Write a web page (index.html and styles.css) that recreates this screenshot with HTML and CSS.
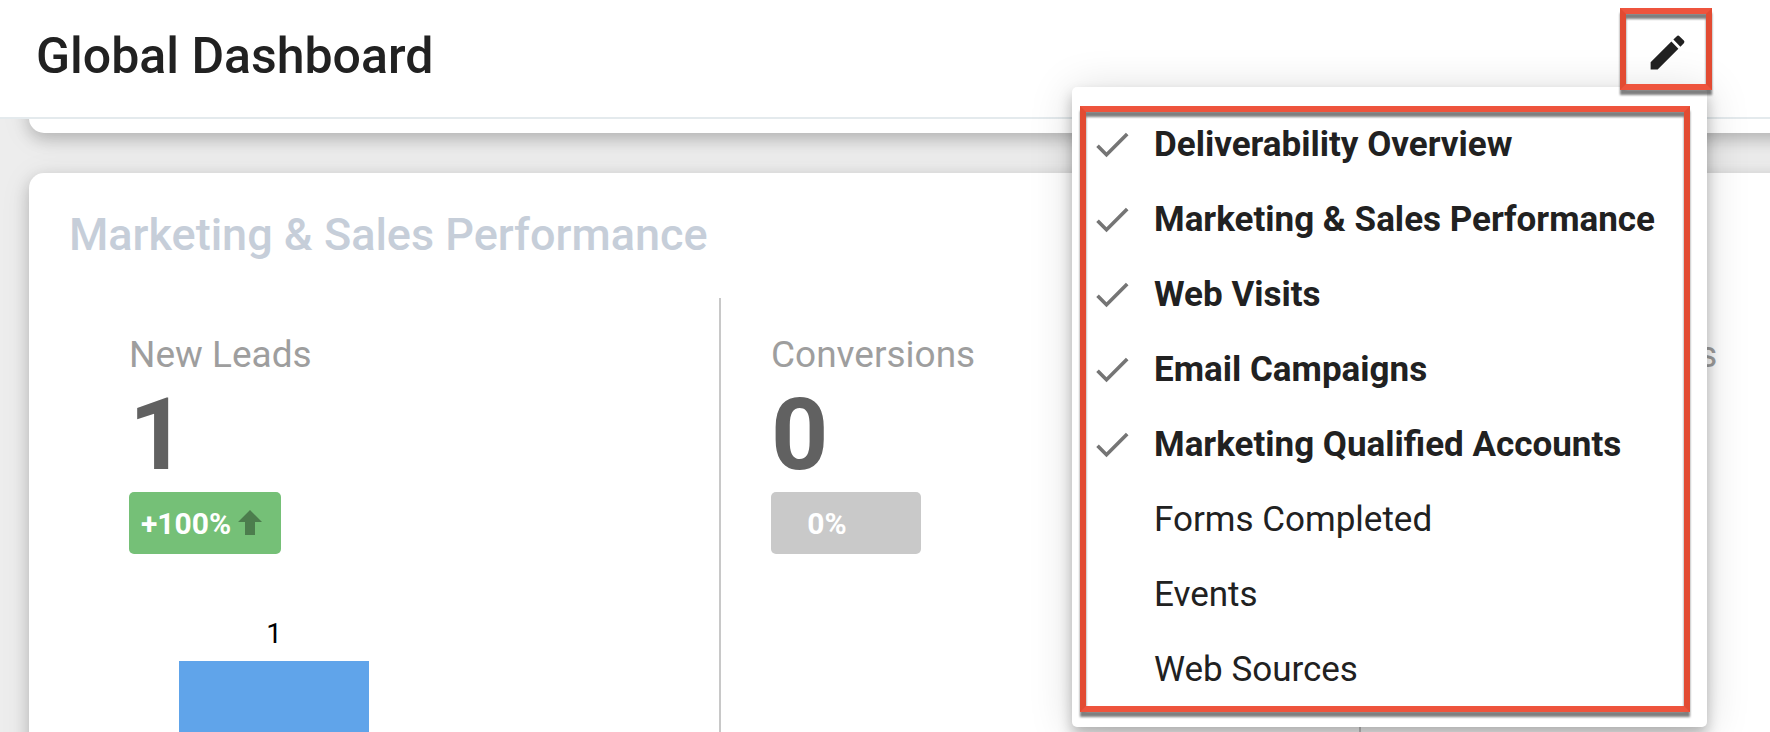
FILE: index.html
```
<!DOCTYPE html>
<html lang="en">
<head>
  <meta charset="UTF-8">
  <meta name="viewport" content="width=device-width, initial-scale=1.0">
  <title>Global Dashboard</title>
  <link rel="stylesheet" href="styles.css">
</head>
<body>

  <header class="header">
    <h1>Global Dashboard</h1>
    <button class="edit-button highlight" type="button" aria-label="Edit dashboard">
      <svg viewBox="0 0 24 24" aria-hidden="true">
        <path d="M3 17.25V21h3.75L17.81 9.94l-3.75-3.75L3 17.25zM20.71 7.04c.39-.39.39-1.02 0-1.41l-2.34-2.34c-.39-.39-1.02-.39-1.41 0l-1.83 1.83 3.75 3.75 1.83-1.83z"/>
      </svg>
    </button>

    <div class="menu highlight">
      <label class="menu-item"><input type="checkbox" checked><span>Deliverability Overview</span></label>
      <label class="menu-item"><input type="checkbox" checked><span>Marketing &amp; Sales Performance</span></label>
      <label class="menu-item"><input type="checkbox" checked><span>Web Visits</span></label>
      <label class="menu-item"><input type="checkbox" checked><span>Email Campaigns</span></label>
      <label class="menu-item"><input type="checkbox" checked><span>Marketing Qualified Accounts</span></label>
      <label class="menu-item"><input type="checkbox"><span>Forms Completed</span></label>
      <label class="menu-item"><input type="checkbox"><span>Events</span></label>
      <label class="menu-item"><input type="checkbox"><span>Web Sources</span></label>
    </div>
  </header>

  <main class="dashboard">
    <section class="card card-scrolled"></section>

    <section class="card">
      <h2>Marketing &amp; Sales Performance</h2>
      <div class="metrics">
        <div class="metric">
          <h3>New Leads</h3>
          <p class="value">1</p>
          <div class="badge badge-up">
            <span>+100%</span>
            <svg viewBox="0 0 38 38" aria-hidden="true"><path d="M19 6l12 12h-7v13h-10v-13h-7z"/></svg>
          </div>
          <div class="chart">
            <span class="bar-label">1</span>
            <div class="bar"></div>
          </div>
        </div>
        <div class="metric">
          <h3>Conversions</h3>
          <p class="value">0</p>
          <div class="badge">
            <span>0%</span>
            <svg viewBox="0 0 38 38" aria-hidden="true"></svg>
          </div>
        </div>
        <div class="metric">
          <h3>New Opportunities</h3>
        </div>
      </div>
    </section>
  </main>

</body>
</html>
```
FILE: styles.css
```
* {
  box-sizing: border-box;
}

body {
  display: flex;
  flex-direction: column;
  margin: 0;
  height: 100vh;
  overflow: hidden;
  background-color: #ededed;
  color: #212121;
  font-family: Roboto, "Liberation Sans", sans-serif;
}

h1, h2, h3, p {
  margin: 0;
}

/* header */
.header {
  position: relative;
  z-index: 2;
  display: flex;
  align-items: flex-start;
  justify-content: space-between;
  padding: 8px 58px 13px 36px;
  border-bottom: 2px solid #e4eaed;
  background-color: #fff;
}

h1 {
  font-size: 50px;
  font-weight: 500;
  line-height: 96px;
}

.highlight::after {
  content: "";
  position: absolute;
  inset: 0;
  border: 6px solid;
  border-color: #ee543d #e24b32;
  filter: drop-shadow(0 5px 1px rgba(0, 0, 0, 0.5));
  pointer-events: none;
}

.edit-button {
  position: relative;
  z-index: 1;
  display: flex;
  align-items: center;
  justify-content: center;
  width: 92px;
  height: 82px;
  padding: 6px 0 0 2px;
  border: none;
  background: none;
  cursor: pointer;
}

.edit-button svg {
  width: 45px;
  height: 45px;
  fill: #212121;
}

/* widget menu */
.menu {
  position: absolute;
  top: 87px;
  right: 63px;
  width: 635px;
  padding: 20px 18px;
  border-radius: 5px;
  background-color: #fff;
  box-shadow: 0 8px 14px rgba(0, 0, 0, 0.25), 0 4px 44px rgba(0, 0, 0, 0.15);
}

.menu::after {
  inset: 19px 17px 15px 8px;
}

.menu-item {
  display: flex;
  align-items: center;
  gap: 20px;
  height: 75px;
  font-size: 35px;
  white-space: nowrap;
  cursor: pointer;
}

.menu-item input {
  appearance: none;
  width: 44px;
  height: 44px;
  margin: 0;
}

.menu-item input:checked {
  background-color: #757575;
  clip-path: polygon(37.5% 67.4%, 20.1% 50%, 14.2% 55.9%, 37.5% 79.2%, 87.5% 29.2%, 81.6% 23.3%);
}

.menu-item input:checked + span {
  font-weight: 700;
}

/* cards run past the right edge of the window */
.dashboard {
  display: flex;
  flex: 1;
  flex-direction: column;
  align-items: flex-start;
  gap: 40px;
  min-height: 0;
  padding-left: 29px;
  overflow: hidden;
}

.card {
  flex-shrink: 0;
  min-width: 115%;
  padding: 35px 50px 0 50px;
  border-radius: 15px;
  background-color: #fff;
  box-shadow: 0 6px 16px rgba(0, 0, 0, 0.2), 0 4px 32px rgba(0, 0, 0, 0.08);
}

.card-scrolled {
  height: 80px;
  margin-top: -66px;
}

h2 {
  margin: 0 -10px 36px;
  color: #c6ced9;
  font-size: 45px;
  font-weight: 500;
  line-height: 54px;
}

.metrics {
  display: grid;
  grid-template-columns: repeat(3, 640px);
}

.metric {
  padding: 35px 50px 100px;
}

.metric + .metric {
  border-left: 2px solid #c8c8c8;
}

h3 {
  color: #9e9e9e;
  font-size: 37px;
  font-weight: 400;
  line-height: 44px;
}

.value {
  margin: 8px 0 7px;
  color: #616161;
  font-size: 100px;
  font-weight: 700;
  line-height: 100px;
}

.badge {
  display: inline-flex;
  align-items: center;
  justify-content: center;
  min-width: 150px;
  height: 62px;
  padding: 0 12px;
  border-radius: 5px;
  background-color: #c9c9c9;
  color: #fff;
  font-size: 30px;
  font-weight: 700;
}

.badge svg {
  width: 38px;
  height: 38px;
  fill: #4c7d4d;
}

.badge-up {
  background-color: #75c077;
}

.chart {
  display: flex;
  flex-direction: column;
  align-items: center;
  gap: 11px;
  width: 190px;
  margin: 64px 0 0 50px;
}

.bar-label {
  color: #000;
  font-size: 28px;
  line-height: 32px;
}

.bar {
  width: 100%;
  height: 200px;
  background-color: #60a4ea;
}
```
